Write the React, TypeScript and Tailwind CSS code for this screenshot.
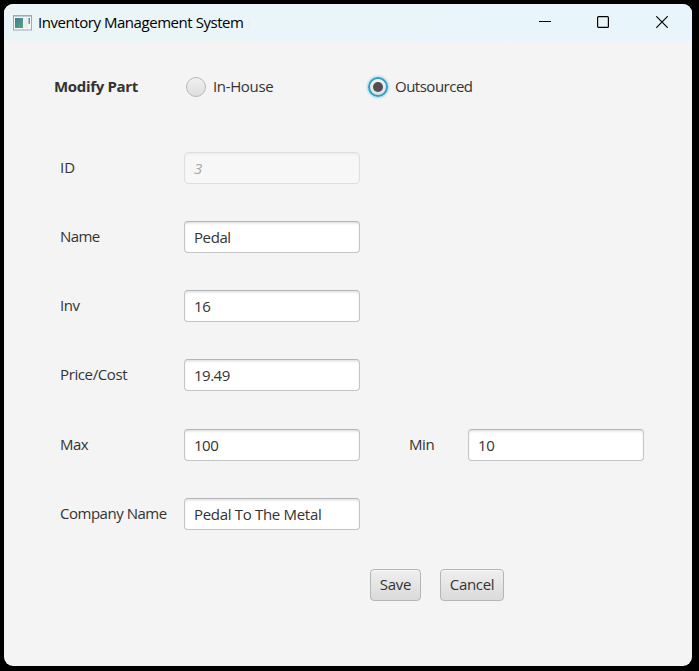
import React from "react";

type FieldProps = { value: string; disabled?: boolean; tracking?: string };

function Field({ value, disabled, tracking = "" }: FieldProps) {
  const look = disabled
    ? "border-[#dfdfdf] bg-[#f7f7f7] text-[#a6a6a6] italic shadow-[inset_0_2px_3px_-1px_#e9e9e9]"
    : "border-[#c4c4c4] border-t-[#b4b4b4] bg-white text-[#333] shadow-[inset_0_2px_3px_-1px_#d8d8d8]";
  return (
    <div className={`flex h-8 w-44 shrink-0 items-center rounded-[4px] border pl-[9px] ${look}`}>
      <span className={tracking}>{value}</span>
    </div>
  );
}

function Label({ text, tracking = "" }: { text: string; tracking?: string }) {
  return <div className={`w-[124px] shrink-0 pb-0.5 ${tracking}`}>{text}</div>;
}

function AppIcon() {
  return (
    <svg width="19" height="16" viewBox="0 0 19 16" className="shrink-0">
      <defs>
        <linearGradient id="pane" x1="0" y1="0" x2="1" y2="1">
          <stop offset="0" stopColor="#3d78a0" />
          <stop offset="1" stopColor="#58aa70" />
        </linearGradient>
        <linearGradient id="bar" x1="0" y1="0" x2="0" y2="1">
          <stop offset="0" stopColor="#4d82a0" />
          <stop offset="1" stopColor="#68ac70" />
        </linearGradient>
      </defs>
      <rect x="0.5" y="0.5" width="18" height="14.5" fill="#f5f7f8" stroke="#a2a8ae" />
      <path d="M1 1.5H18" stroke="#c3c9ce" />
      <rect x="2" y="3" width="8" height="10" fill="url(#pane)" />
      <rect x="11" y="3" width="4" height="10" fill="#eceeef" />
      <rect x="15.5" y="3" width="1.5" height="6" fill="url(#bar)" />
    </svg>
  );
}

export default function App() {
  return (
    <div className="h-[671px] w-[699px] overflow-hidden bg-black pt-1 pl-1 font-['Open_Sans','Noto_Sans',sans-serif] text-[15px] leading-5 text-[#333] whitespace-nowrap">
      <div className="flex h-[662px] w-[688px] flex-col overflow-hidden rounded-[9px] bg-[#f4f4f4]">
        <div className="flex h-[37px] shrink-0 items-center bg-linear-to-r from-[#ebf5f8] to-[#e8f5fb] pl-[9px] text-black">
          <AppIcon />
          <span className="ml-[6px] pb-0.5 tracking-[-0.45px]">Inventory Management System</span>
          <div className="mr-[24px] ml-auto flex items-center pb-px">
            <svg width="12" height="12" viewBox="0 0 12 12" stroke="#000"><path d="M0 5.5H12" /></svg>
            <svg className="ml-[46px]" width="12" height="12" viewBox="0 0 12 12" fill="none" stroke="#000" strokeWidth="1.2"><rect x="0.6" y="0.6" width="10.8" height="10.8" rx="1" /></svg>
            <svg className="ml-[47px]" width="12" height="12" viewBox="0 0 12 12" stroke="#000" strokeWidth="1.2"><path d="M0.3 0.3L11.7 11.7M11.7 0.3L0.3 11.7" /></svg>
          </div>
        </div>
        <div className="mt-[36px] flex h-5 shrink-0 items-center pl-[50px]">
          <span className="w-[132px] pb-0.5 font-bold tracking-[-0.33px]">Modify Part</span>
          <div className="flex w-[182px] items-center">
            <span className="h-5 w-5 rounded-full border border-[#b8b8b8] bg-linear-to-b from-[#f0f0f0] to-[#dedede]" />
            <span className="ml-[7px] pb-0.5 tracking-[-0.35px]">In-House</span>
          </div>
          <div className="flex items-center">
            <span className="flex h-5 w-5 items-center justify-center rounded-full border-2 border-[#2f9fc6] bg-linear-to-b from-[#f4f4f4] to-[#dedede] shadow-[0_0_2px_1px_#a9dcec]">
              <span className="h-[10px] w-[10px] rounded-full bg-[#505050]" />
            </span>
            <span className="ml-[7px] pb-0.5 tracking-[-0.5px]">Outsourced</span>
          </div>
        </div>
        <div className="mt-[55px] flex shrink-0 flex-col gap-[37px] pl-[56px]">
          <div className="flex items-center"><Label text="ID" /><Field value="3" disabled /></div>
          <div className="flex items-center"><Label text="Name" tracking="tracking-[-0.6px]" /><Field value="Pedal" tracking="tracking-[-0.4px]" /></div>
          <div className="flex items-center"><Label text="Inv" tracking="tracking-[-0.4px]" /><Field value="16" tracking="tracking-[-0.4px]" /></div>
          <div className="flex items-center"><Label text="Price/Cost" tracking="tracking-[-0.38px]" /><Field value="19.49" tracking="tracking-[-0.5px]" /></div>
          <div className="mt-px flex items-center">
            <Label text="Max" tracking="tracking-[-0.5px]" />
            <Field value="100" tracking="tracking-[-0.5px]" />
            <span className="ml-[49px] w-[59px] pb-0.5 tracking-[-0.4px]">Min</span>
            <Field value="10" tracking="tracking-[-0.4px]" />
          </div>
          <div className="flex items-center"><Label text="Company Name" tracking="tracking-[-0.48px]" /><Field value="Pedal To The Metal" tracking="tracking-[-0.31px]" /></div>
        </div>
        <div className="mt-[39px] flex shrink-0 gap-[19px] pl-[366px]">
          <button className="h-8 w-[51px] rounded-[4px] border border-[#b5b5b5] bg-linear-to-b from-[#efefef] to-[#dadada] pb-0.5 tracking-[-0.3px] shadow-[inset_0_1px_0_#f8f8f8]">Save</button>
          <button className="h-8 w-16 rounded-[4px] border border-[#b5b5b5] bg-linear-to-b from-[#efefef] to-[#dadada] pb-0.5 tracking-[-0.35px] shadow-[inset_0_1px_0_#f8f8f8]">Cancel</button>
        </div>
      </div>
    </div>
  );
}
